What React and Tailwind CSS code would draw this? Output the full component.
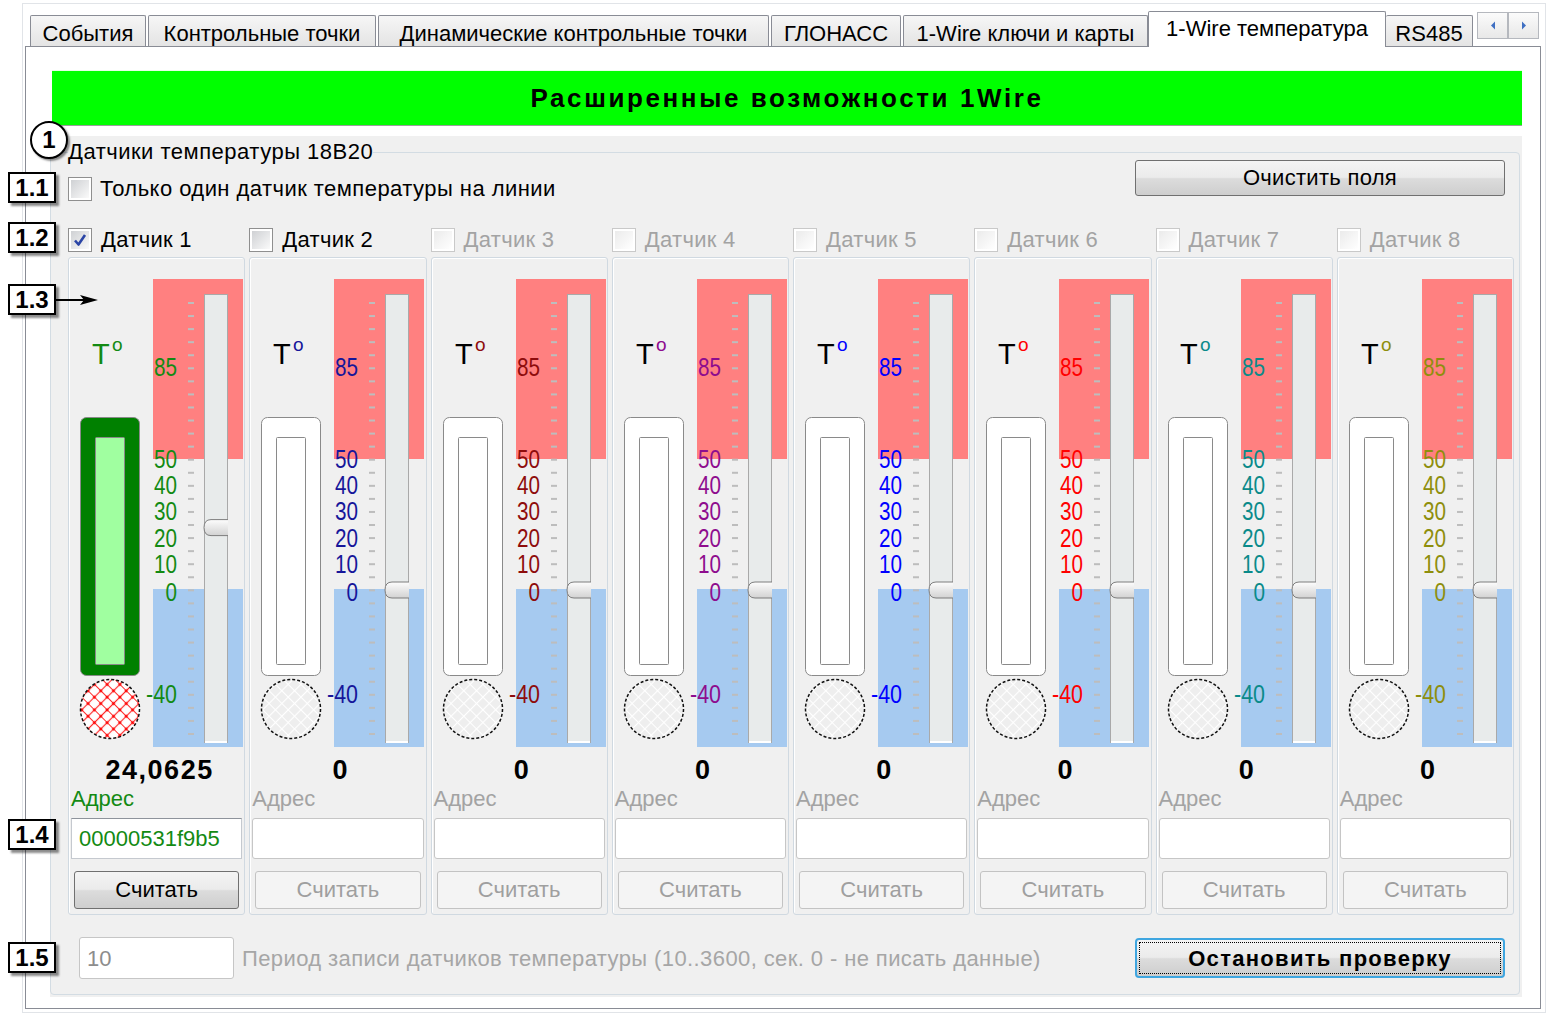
import React from "react";

const SENSORS = [
  { n: 1, color: "#138a13", checked: true, on: true, value: "24,0625", addr: "00000531f9b5", t: 24 },
  { n: 2, color: "#16169a", on: true, value: "0", t: 0 },
  { n: 3, color: "#8e0c0c", value: "0", t: 0 },
  { n: 4, color: "#8e0c8e", value: "0", t: 0 },
  { n: 5, color: "#0000ff", value: "0", t: 0 },
  { n: 6, color: "#ff0000", value: "0", t: 0 },
  { n: 7, color: "#0a8a8a", value: "0", t: 0 },
  { n: 8, color: "#8e8e0c", value: "0", t: 0 },
];

const LABELS = [
  ["85", 118, 23],
  ["50", 209.5, 23],
  ["40", 236, 23],
  ["30", 262, 23],
  ["20", 288.5, 23],
  ["10", 315, 23],
  ["0", 343, 11.5],
  ["-40", 444.5, 31],
];

const TABS = [
  ["События", "w-[116px] mr-[2px]"],
  ["Контрольные точки", "w-[228px] mr-[2px]"],
  ["Динамические контрольные точки", "w-[391px] mr-[2px]"],
  ["ГЛОНАСС", "w-[130px] mr-[2px]"],
  ["1-Wire ключи и карты", "w-[245px]"],
];

const FONT = "Liberation Sans, Arial, sans-serif";

function Gauge({ s }) {
  const ty = 332 - s.t * 2.6;
  const ticks = Array.from({ length: 34 }, (_, i) => 45 + i * 13.06);
  return (
    <svg width="177" height="493" viewBox="0 0 177 493" className="block shrink-0">
      <defs>
        <pattern id={`h${s.n}`} width="9" height="9" patternUnits="userSpaceOnUse" patternTransform="rotate(45)">
          <rect width="9" height="9" fill={s.checked ? "#ffffff" : "#eeeeee"} />
          <path d="M4.5 0V9M0 4.5H9" stroke={s.checked ? "#ff2a2a" : "#ffffff"} strokeWidth="1.2" />
          {s.checked && <circle cx="4.5" cy="4.5" r="1.5" fill="#ff0000" />}
        </pattern>
        <linearGradient id={`g${s.n}`} x1="0" y1="0" x2="0" y2="1">
          <stop offset="0" stopColor="#fdfdfd" />
          <stop offset="1" stopColor="#d2d2d2" />
        </linearGradient>
      </defs>

      {/* temperature zones */}
      <rect x="84" y="21" width="90" height="180" fill="#ff8080" />
      <rect x="84" y="331" width="90" height="158" fill="#a6caf0" />

      {ticks.map((y) => (
        <line key={y} x1="119" x2="125" y1={y} y2={y} stroke="#bdbdbd" strokeWidth="2" />
      ))}

      {/* slider */}
      <rect x="135.5" y="36.5" width="23" height="448" fill="#e8ebeb" stroke="#a9a9a9" />
      <line x1="136" x2="158" y1="484" y2="484" stroke="#ffffff" strokeWidth="2" />
      <path
        d={`M159 ${ty - 8}H142Q135 ${ty - 8} 135 ${ty}Q135 ${ty + 8} 142 ${ty + 8}H159`}
        fill={`url(#g${s.n})`}
        stroke="#7d7d7d"
      />

      {LABELS.map(([t, y, w]) => (
        <text
          key={t}
          x="108"
          y={y}
          textAnchor="end"
          fontSize="25"
          fill={s.color}
          fontFamily={FONT}
          textLength={w}
          lengthAdjust="spacingAndGlyphs"
        >
          {t}
        </text>
      ))}

      <text x="23" y="106" fontSize="29" fontFamily={FONT} fill={s.checked ? s.color : "#000000"}>
        T
      </text>
      <text x="43" y="93" fontSize="19" fontFamily={FONT} fill={s.color}>
        o
      </text>

      {/* thermometer tube */}
      <rect
        x="11.5"
        y="159.5"
        width="59"
        height="258"
        rx="6"
        fill={s.checked ? "#008000" : "#ffffff"}
        stroke="#8a8a8a"
      />
      <rect
        x="26.5"
        y="179.5"
        width="29"
        height="227"
        rx="1"
        fill={s.checked ? "#a0ffa0" : "#ffffff"}
        stroke="#8a8a8a"
      />

      {/* bulb */}
      <circle cx="41" cy="451" r="29.5" fill={`url(#h${s.n})`} stroke="#111111" strokeWidth="1.5" strokeDasharray="3 2" />
    </svg>
  );
}

function Check({ checked, dim }) {
  return (
    <span className={`w-[24px] h-[24px] shrink-0 border bg-white p-[2px] flex ${dim ? "border-[#c9c9c9]" : "border-[#8f8f8f]"}`}>
      <span
        className={`flex-1 flex items-center justify-center ${
          dim ? "bg-linear-to-br from-[#ebebeb] to-white" : "bg-linear-to-br from-[#cfd1d4] to-[#fafafa]"
        }`}
      >
        {checked && (
          <svg width="16" height="16" viewBox="0 0 16 16">
            <path d="M3 8.5L6.5 12.5L13 3" fill="none" stroke="#2b45a6" strokeWidth="2.6" strokeLinejoin="round" />
          </svg>
        )}
      </span>
    </span>
  );
}

function Btn({ children, dim, className = "" }) {
  return (
    <button
      type="button"
      className={`rounded-[3px] border flex items-center justify-center text-[22px] leading-none ${
        dim
          ? "border-[#c3c3c3] bg-[#f4f4f4] text-[#9f9f9f]"
          : "border-[#707070] bg-[linear-gradient(#f4f4f4,#ebebeb_48%,#dcdcdc_52%,#cecece)] text-black"
      } ${className}`}
    >
      {children}
    </button>
  );
}

function SensorColumn({ s }) {
  return (
    <div className="h-[658px] border border-[#d0d9e1] rounded-[3px] shadow-[inset_1px_1px_0_#ffffff] flex flex-col">
      <Gauge s={s} />
      <div className="h-[38px] pl-[6px] flex items-center justify-center font-bold text-[27px] tracking-[1.5px]">
        {s.value}
      </div>
      <div className={`h-[20px] leading-[20px] pl-[2px] ${s.checked ? "text-[#138a13]" : "text-[#a3a3a3]"}`}>Адрес</div>
      <div
        className={`mt-[9px] ml-[2px] mr-[2px] h-[41px] bg-white border flex items-center pl-[7px] ${
          s.checked ? "border-[#c5c9cf] border-t-[#8e939b]" : "border-[#c6c6c6] rounded-[3px]"
        }`}
      >
        <span className="text-[#138a13]">{s.addr}</span>
      </div>
      <Btn dim={!s.checked} className="mt-[12px] mx-[5px] h-[38px]">
        Считать
      </Btn>
    </div>
  );
}

function Tag({ children, className }) {
  return (
    <div
      className={`absolute left-[8px] w-[48px] h-[31px] border-2 border-black bg-white flex items-center justify-center font-bold text-[24px] leading-none shadow-[3px_3px_2px_rgba(0,0,0,0.45)] ${className}`}
    >
      {children}
    </div>
  );
}

export default function App() {
  return (
    <div className="w-[1551px] h-[1013px] bg-white relative overflow-hidden font-['Liberation_Sans',Arial,sans-serif] text-black text-[22px] pl-[22px] pt-[3px]">
      <div className="w-[1524px] h-[1010px] border border-[#e1e4e8] pt-[7px]">
        {/* tabs */}
        <div className="relative z-10 flex items-end h-[36px] -mb-px pl-[7px]">
          {TABS.map(([t, w]) => (
            <div
              key={t}
              className={`${w} h-[31px] mb-[1px] pt-[5px] border border-b-0 border-[#898c95] rounded-t-[2px] bg-linear-to-b from-[#f6f6f6] to-[#e4e4e4] flex items-center justify-center whitespace-nowrap`}
            >
              {t}
            </div>
          ))}
          <div className="w-[238px] h-[36px] pb-[3px] border border-b-0 border-[#898c95] rounded-t-[2px] bg-white flex items-center justify-center whitespace-nowrap">
            1-Wire температура
          </div>
          <div className="w-[87px] h-[31px] mb-[1px] pt-[5px] border border-b-0 border-l-0 border-[#898c95] rounded-t-[2px] bg-linear-to-b from-[#f6f6f6] to-[#e4e4e4] flex items-center justify-center">
            RS485
          </div>
          <div className="self-start mt-[1px] ml-[4px] flex">
            {[0, 1].map((i) => (
              <div
                key={i}
                className="w-[31px] h-[27px] border border-[#b5b8be] bg-linear-to-b from-[#fbfbfb] to-[#e8e8e8] flex items-center justify-center"
              >
                <svg width="6" height="9" viewBox="0 0 6 9">
                  <path d={i ? "M1 0.5L5 4.5L1 8.5Z" : "M5 0.5L1 4.5L5 8.5Z"} fill="#3f6fc2" />
                </svg>
              </div>
            ))}
          </div>
        </div>

        {/* tab page */}
        <div className="ml-[2px] w-[1516px] h-[963px] border border-[#898c95] bg-white">
          <div className="mt-[24px] ml-[26px] w-[1470px] h-[55px] bg-[#00ff00] border-b border-[#9aa09a] shadow-[0_-1px_0_#e6ffe6] flex items-center justify-center font-bold text-[26px] tracking-[2.6px]">
            Расширенные возможности 1Wire
          </div>

          <div className="mt-[10px] ml-[24px] w-[1472px] h-[861px] bg-[#f0f0f0] pt-[4px]">
            <fieldset className="w-[1470px] border border-[#d3dce3] rounded-[4px] pl-[17px] pr-[5px] pb-[15px]">
              <legend className="text-[22px] leading-[24px] tracking-[0.5px]">Датчики температуры 18В20</legend>

              <div className="flex items-start justify-between -mt-[4px] h-[44px]">
                <div className="mt-[17px] flex items-center gap-[8px]">
                  <Check />
                  <span className="leading-[24px] tracking-[0.45px]">Только один датчик температуры на линии</span>
                </div>
                <Btn className="w-[370px] h-[36px] mr-[9px] tracking-[0.3px]">Очистить поля</Btn>
              </div>

              <div className="grid grid-cols-8 gap-x-[4px] h-[53px] items-end pb-[5px]">
                {SENSORS.map((s) => (
                  <div key={s.n} className="flex items-center gap-[9px]">
                    <Check checked={s.checked} dim={!s.on} />
                    <span className={`leading-[24px] tracking-[0.3px] ${s.on ? "text-black" : "text-[#a3a3a3]"}`}>
                      Датчик {s.n}
                    </span>
                  </div>
                ))}
              </div>

              <div className="grid grid-cols-8 gap-x-[4px]">
                {SENSORS.map((s) => (
                  <SensorColumn key={s.n} s={s} />
                ))}
              </div>

              <div className="mt-[22px] h-[42px] flex items-center">
                <div className="ml-[11px] w-[155px] h-[42px] bg-white border border-[#c6c6c6] rounded-[3px] flex items-center pl-[7px] text-[#8d8d8d]">
                  10
                </div>
                <span className="ml-[8px] text-[#a6a6a6] whitespace-nowrap tracking-[0.4px]">
                  Период записи датчиков температуры (10..3600, сек. 0 - не писать данные)
                </span>
                <button
                  type="button"
                  className="ml-auto mr-[9px] w-[370px] h-[40px] rounded-[4px] border-2 border-[#3fa6e0] bg-[linear-gradient(#f4f4f4,#ebebeb_48%,#dcdcdc_52%,#cecece)] p-[2px]"
                >
                  <span className="h-full w-full border border-dotted border-black flex items-center justify-center font-bold text-[22px] tracking-[1.3px]">
                    Остановить проверку
                  </span>
                </button>
              </div>
            </fieldset>
          </div>
        </div>
      </div>

      {/* annotation callouts */}
      <div className="absolute left-[30px] top-[121px] w-[38px] h-[38px] rounded-full border-2 border-black bg-white flex items-center justify-center font-bold text-[24px] leading-none shadow-[2px_2px_2px_rgba(0,0,0,0.45)]">
        1
      </div>
      <Tag className="top-[172px]">1.1</Tag>
      <Tag className="top-[222px]">1.2</Tag>
      <Tag className="top-[284px]">1.3</Tag>
      <svg className="absolute left-[56px] top-[293px]" width="44" height="14" viewBox="0 0 44 14">
        <line x1="0" y1="7" x2="30" y2="7" stroke="#000" strokeWidth="2" />
        <path d="M24 2L42 7L24 12L28 7Z" fill="#000" />
      </svg>
      <Tag className="top-[819px]">1.4</Tag>
      <Tag className="top-[942px]">1.5</Tag>
    </div>
  );
}
